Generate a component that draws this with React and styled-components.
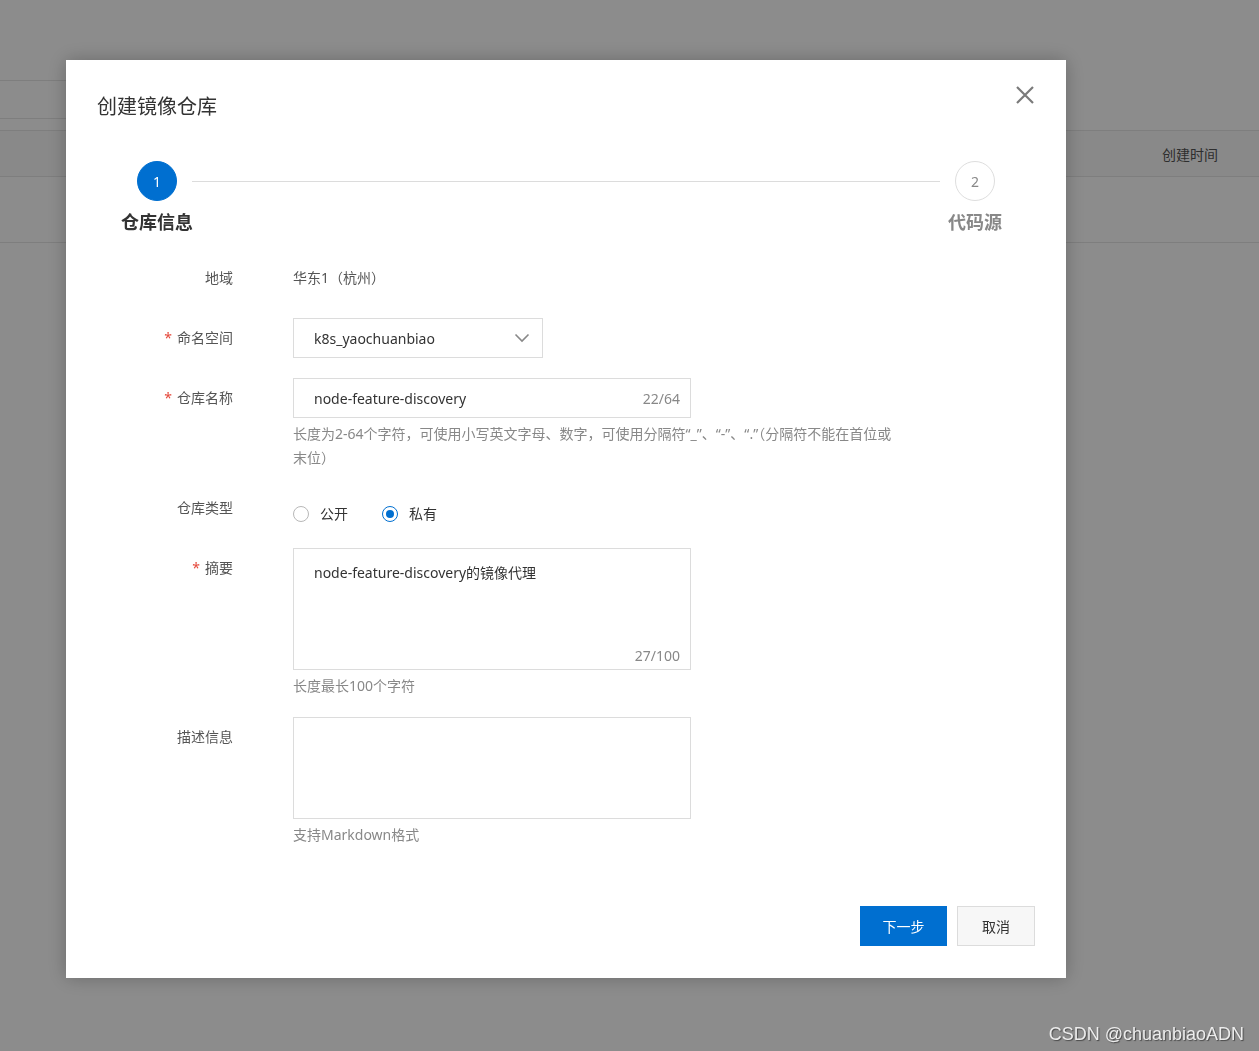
import React from "react";
import styled, { createGlobalStyle } from "styled-components";

const GlobalStyle = createGlobalStyle`
  html, body { margin: 0; padding: 0; }
  body {
    background: #ffffff;
    font-family: "Noto Sans", "Noto Sans CJK SC", sans-serif;
    color: #333;
    width: 1259px;
    height: 1051px;
    overflow: hidden;
  }
  * { box-sizing: border-box; }
`;

/* ---------- background page ---------- */
const Page = styled.div`
  width: 1259px;
  height: 1051px;
  background: #fff;
  padding-top: 80px;
`;
const Toolbar = styled.div`
  display: flex;
  height: 39px;
`;
const SearchBox = styled.div`
  width: 260px;
  border-top: 1px solid #e6e6e6;
  border-bottom: 1px solid #e6e6e6;
`;
const Table = styled.div`
  margin-top: 11px;
`;
const HeaderRow = styled.div`
  display: flex;
  justify-content: flex-end;
  align-items: center;
  height: 47px;
  padding-right: 41px;
  border-top: 1px solid #e6e6e6;
  border-bottom: 1px solid #e6e6e6;
  background: #fafafa;
  font-size: 14px;
  color: #555;
`;
const DataRow = styled.div`
  height: 66px;
  border-bottom: 1px solid #e6e6e6;
`;

/* ---------- overlay & modal ---------- */
const Overlay = styled.div`
  position: fixed;
  inset: 0;
  background: rgba(0, 0, 0, 0.45);
  padding: 60px 0 0 66px;
`;
const Modal = styled.div`
  position: relative;
  width: 1000px;
  height: 918px;
  background: #fff;
  box-shadow: 0 0 18px rgba(0, 0, 0, 0.25);
  display: flex;
  flex-direction: column;
`;
const Title = styled.h2`
  margin: 0;
  padding: 33px 0 0 31px;
  font-size: 20px;
  line-height: 28px;
  font-weight: 400;
  color: #333;
`;
const CloseButton = styled.button`
  position: absolute;
  top: 26px;
  right: 32px;
  width: 18px;
  height: 18px;
  padding: 0;
  border: 0;
  background: none;
  cursor: pointer;
  display: flex;
`;

/* ---------- steps ---------- */
const Steps = styled.div`
  display: flex;
  align-items: flex-start;
  padding: 0 56px;
  margin-top: 40px;
`;
const Step = styled.div`
  width: 70px;
  display: flex;
  flex-direction: column;
  align-items: center;
`;
const StepCircle = styled.div`
  width: 40px;
  height: 40px;
  border-radius: 50%;
  display: flex;
  align-items: center;
  justify-content: center;
  font-size: 14px;
  background: ${(p) => (p.$active ? "#006fd0" : "#fff")};
  color: ${(p) => (p.$active ? "#fff" : "#888")};
  border: 1px solid ${(p) => (p.$active ? "#006fd0" : "#dedede")};
`;
const StepLabel = styled.div`
  margin-top: 9px;
  font-size: 18px;
  line-height: 24px;
  font-weight: 700;
  white-space: nowrap;
  color: ${(p) => (p.$active ? "#333" : "#888")};
`;
const StepLine = styled.div`
  flex: 1;
  height: 1px;
  margin-top: 20px;
  background: #dcdcdc;
`;

/* ---------- form ---------- */
const Form = styled.div`
  margin-top: 24px;
  display: flex;
  flex-direction: column;
`;
const FormItem = styled.div`
  display: grid;
  grid-template-columns: 167px 1fr;
  column-gap: 60px;
  margin-bottom: ${(p) => p.$gap ?? 20}px;
`;
const Label = styled.label`
  text-align: right;
  font-size: 14px;
  line-height: 20px;
  padding-top: 10px;
  color: #555;
`;
const Required = styled.span`
  color: #e5483b;
  margin-right: 5px;
`;
const Control = styled.div`
  display: flex;
  flex-direction: column;
  align-items: flex-start;
`;
const StaticValue = styled.div`
  font-size: 14px;
  line-height: 40px;
  color: #555;
`;
const Select = styled.div`
  width: 250px;
  height: 40px;
  border: 1px solid #dcdcdc;
  display: flex;
  align-items: center;
  justify-content: space-between;
  padding: 0 12px 0 20px;
  font-size: 14px;
  color: #333;
`;
const Input = styled.div`
  width: 398px;
  height: 40px;
  border: 1px solid #dcdcdc;
  display: flex;
  align-items: center;
  justify-content: space-between;
  padding: 0 10px 0 20px;
  font-size: 14px;
  color: #333;
`;
const Counter = styled.span`
  color: #888;
  font-size: 14px;
`;
const TextArea = styled.div`
  width: 398px;
  height: ${(p) => p.$h}px;
  border: 1px solid #dcdcdc;
  display: flex;
  flex-direction: column;
  justify-content: space-between;
  padding: 14px 10px 3px 20px;
  font-size: 14px;
  line-height: 20px;
  color: #333;
`;
const CounterRow = styled.div`
  align-self: flex-end;
`;
const Help = styled.div`
  margin-top: 4px;
  max-width: ${(p) => p.$max ?? 656}px;
  font-size: 14px;
  line-height: 24px;
  color: #888;
`;
const RadioGroup = styled.div`
  height: 40px;
  padding-top: 12px;
  display: flex;
  gap: 34px;
`;
const RadioOption = styled.label`
  display: flex;
  align-items: center;
  gap: 11px;
  font-size: 14px;
  line-height: 20px;
  color: #333;
`;
const RadioCircle = styled.span`
  width: 16px;
  height: 16px;
  border-radius: 50%;
  border: 1px solid ${(p) => (p.$checked ? "#006fd0" : "#b8b8b8")};
  display: flex;
  align-items: center;
  justify-content: center;
  &::after {
    content: "";
    width: 8px;
    height: 8px;
    border-radius: 50%;
    background: ${(p) => (p.$checked ? "#006fd0" : "transparent")};
  }
`;

/* ---------- footer ---------- */
const Footer = styled.div`
  margin-top: auto;
  display: flex;
  justify-content: flex-end;
  gap: 10px;
  padding: 0 31px 32px 0;
`;
const Button = styled.button`
  width: ${(p) => p.$w}px;
  height: 40px;
  font-family: inherit;
  font-size: 14px;
  cursor: pointer;
  border: 1px solid ${(p) => (p.$primary ? "#006fd0" : "#dcdcdc")};
  background: ${(p) => (p.$primary ? "#006fd0" : "#f7f7f7")};
  color: ${(p) => (p.$primary ? "#fff" : "#333")};
`;

const Watermark = styled.div`
  position: fixed;
  right: 15px;
  bottom: 6px;
  font-family: "Liberation Sans", Arial, sans-serif;
  font-size: 18px;
  color: #ececec;
  text-shadow: 1px 1px 1px #4a4a4a;
`;

function Chevron() {
  return (
    <svg width="16" height="10" viewBox="0 0 16 10" fill="none">
      <path d="M1.5 1.5 L8 8 L14.5 1.5" stroke="#888" strokeWidth="1.6" />
    </svg>
  );
}

function CloseIcon() {
  return (
    <svg width="18" height="18" viewBox="0 0 18 18" fill="none">
      <path d="M1 1 L17 17 M17 1 L1 17" stroke="#7a7a7a" strokeWidth="2.2" />
    </svg>
  );
}

export default function App() {
  return (
    <>
      <GlobalStyle />
      <Page>
        <Toolbar>
          <SearchBox />
        </Toolbar>
        <Table>
          <HeaderRow>创建时间</HeaderRow>
          <DataRow />
        </Table>
      </Page>
      <Overlay>
        <Modal>
          <Title>创建镜像仓库</Title>
          <CloseButton aria-label="close">
            <CloseIcon />
          </CloseButton>
          <Steps>
            <Step>
              <StepCircle $active>1</StepCircle>
              <StepLabel $active>仓库信息</StepLabel>
            </Step>
            <StepLine />
            <Step>
              <StepCircle>2</StepCircle>
              <StepLabel>代码源</StepLabel>
            </Step>
          </Steps>
          <Form>
            <FormItem>
              <Label>地域</Label>
              <Control>
                <StaticValue>华东1（杭州）</StaticValue>
              </Control>
            </FormItem>
            <FormItem>
              <Label>
                <Required>*</Required>命名空间
              </Label>
              <Control>
                <Select>
                  <span>k8s_yaochuanbiao</span>
                  <Chevron />
                </Select>
              </Control>
            </FormItem>
            <FormItem $gap={18}>
              <Label>
                <Required>*</Required>仓库名称
              </Label>
              <Control>
                <Input>
                  <span>node-feature-discovery</span>
                  <Counter>22/64</Counter>
                </Input>
                <Help $max={607}>
                  长度为2-64个字符，可使用小写英文字母、数字，可使用分隔符“_”、“-”、“.”（分隔符不能在首位或末位）
                </Help>
              </Control>
            </FormItem>
            <FormItem>
              <Label>仓库类型</Label>
              <Control>
                <RadioGroup>
                  <RadioOption>
                    <RadioCircle />
                    公开
                  </RadioOption>
                  <RadioOption>
                    <RadioCircle $checked />
                    私有
                  </RadioOption>
                </RadioGroup>
              </Control>
            </FormItem>
            <FormItem $gap={19}>
              <Label>
                <Required>*</Required>摘要
              </Label>
              <Control>
                <TextArea $h={122}>
                  <span>node-feature-discovery的镜像代理</span>
                  <CounterRow>
                    <Counter>27/100</Counter>
                  </CounterRow>
                </TextArea>
                <Help>长度最长100个字符</Help>
              </Control>
            </FormItem>
            <FormItem>
              <Label>描述信息</Label>
              <Control>
                <TextArea $h={102} />
                <Help>支持Markdown格式</Help>
              </Control>
            </FormItem>
          </Form>
          <Footer>
            <Button $primary $w={87}>下一步</Button>
            <Button $w={78}>取消</Button>
          </Footer>
        </Modal>
      </Overlay>
      <Watermark>CSDN @chuanbiaoADN</Watermark>
    </>
  );
}
